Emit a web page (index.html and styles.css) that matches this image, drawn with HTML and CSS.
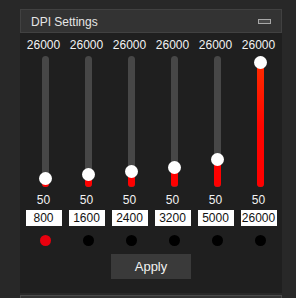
FILE: index.html
```html
<!DOCTYPE html>
<html>
<head>
<meta charset="utf-8">
<link rel="stylesheet" href="styles.css">
</head>
<body>
<div class="panel">
  <div class="panel-header">
    <span class="title">DPI Settings</span>
    <span class="collapse"></span>
  </div>
  <div class="panel-body">
    <div class="columns">
      <div class="col">
        <div class="max">26000</div>
        <div class="track"><div class="fill" style="height:8.5px"></div><div class="thumb" style="bottom:2px"></div></div>
        <div class="min">50</div>
        <div class="value">800</div>
        <div class="dot active"></div>
      </div>
      <div class="col">
        <div class="max">26000</div>
        <div class="track"><div class="fill" style="height:12.2px"></div><div class="thumb" style="bottom:5.7px"></div></div>
        <div class="min">50</div>
        <div class="value">1600</div>
        <div class="dot"></div>
      </div>
      <div class="col">
        <div class="max">26000</div>
        <div class="track"><div class="fill" style="height:15.9px"></div><div class="thumb" style="bottom:9.4px"></div></div>
        <div class="min">50</div>
        <div class="value">2400</div>
        <div class="dot"></div>
      </div>
      <div class="col">
        <div class="max">26000</div>
        <div class="track"><div class="fill" style="height:19.6px"></div><div class="thumb" style="bottom:13.1px"></div></div>
        <div class="min">50</div>
        <div class="value">3200</div>
        <div class="dot"></div>
      </div>
      <div class="col">
        <div class="max">26000</div>
        <div class="track"><div class="fill" style="height:27.9px"></div><div class="thumb" style="bottom:21.4px"></div></div>
        <div class="min">50</div>
        <div class="value">5000</div>
        <div class="dot"></div>
      </div>
      <div class="col">
        <div class="max">26000</div>
        <div class="track"><div class="fill" style="height:125px"></div><div class="thumb" style="bottom:118.5px"></div></div>
        <div class="min">50</div>
        <div class="value">26000</div>
        <div class="dot"></div>
      </div>
    </div>
    <button class="apply">Apply</button>
  </div>
</div>
<div class="panel-next"></div>
</body>
</html>
```
FILE: styles.css
```css
html, body {
  margin: 0;
  padding: 0;
  background: #282828;
  font-family: "Liberation Sans", Arial, sans-serif;
  font-size: 12px;
  color: #f2f2f2;
  overflow: hidden;
}
body {
  padding: 9px 14px 0 20px;
  width: 262px;
}
.panel {
  width: 262px;
}
.panel-header {
  box-sizing: border-box;
  height: 24px;
  background: #333333;
  border: 1px solid #414141;
  display: flex;
  align-items: center;
  justify-content: space-between;
  padding: 0 10px 0 10px;
}
.title {
  color: #e6e6e6;
  line-height: 14px;
  padding-top: 1px;
}
.collapse {
  box-sizing: border-box;
  width: 13px;
  height: 5px;
  border: 1px solid #a8a8a8;
  background: #4a4a4a;
  margin-top: 0px;
}
.panel-body {
  background: #1f1f1f;
  height: 260px;
  box-sizing: border-box;
  padding: 5px 2px 0 2px;
  display: flex;
  flex-direction: column;
  align-items: center;
}
.columns {
  display: grid;
  grid-template-columns: repeat(6, 43px);
  width: 258px;
}
.col {
  display: flex;
  flex-direction: column;
  align-items: center;
}
.max, .min {
  line-height: 14px;
  height: 14px;
}
.track {
  position: relative;
  margin-top: 4px;
  margin-left: 3px;
  width: 7px;
  height: 131px;
  border-radius: 4px;
  background: #474747;
}
.fill {
  position: absolute;
  left: 0;
  bottom: 0;
  width: 7px;
  border-radius: 4px;
  background: linear-gradient(to top, #ff0000 0px, #ff0500 60px, #ff2d00 125px);
  background-size: 7px 125px;
  background-position: bottom;
  background-repeat: no-repeat;
}
.thumb {
  position: absolute;
  left: -3px;
  width: 13px;
  height: 13px;
  border-radius: 50%;
  background: #ffffff;
}
.min {
  margin-top: 6px;
}
.value {
  margin-top: 3px;
  width: 36px;
  height: 16px;
  line-height: 16px;
  background: #ffffff;
  color: #111111;
  text-align: center;
}
.dot {
  margin-top: 9px;
  margin-left: 3px;
  width: 11px;
  height: 11px;
  border-radius: 50%;
  background: #000000;
}
.dot.active {
  background: #e8000e;
}
.apply {
  margin-top: 8px;
  width: 80px;
  height: 25px;
  border: none;
  background: #3a3a3a;
  color: #f2f2f2;
  font-family: "Liberation Sans", Arial, sans-serif;
  font-size: 13px;
  padding: 0;
}
.panel-next {
  margin-top: 2px;
  height: 10px;
  width: 262px;
  box-sizing: border-box;
  background: #333333;
  border: 1px solid #4a4a4a;
}
```
